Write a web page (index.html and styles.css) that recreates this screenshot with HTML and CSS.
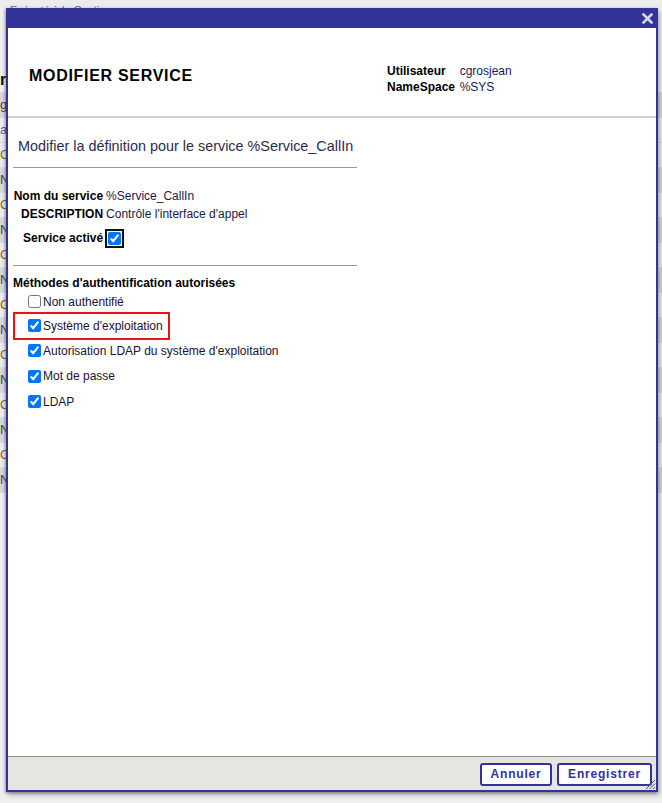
FILE: index.html
```html
<!DOCTYPE html>
<html lang="fr">
<head>
<meta charset="utf-8">
<title>Modifier service</title>
<link rel="stylesheet" href="styles.css">
</head>
<body>
<div class="page">
  <div class="page-top">Exécuté à la Gestion</div>
  <div class="page-list">
    <div class="prow gap"></div>
    <div class="prow big">r</div>
    <div class="prow shade">g</div>
    <div class="prow link">a</div>
    <div class="prow">C</div>
    <div class="prow shade">N</div>
    <div class="prow">C</div>
    <div class="prow shade">N</div>
    <div class="prow">C</div>
    <div class="prow shade">N</div>
    <div class="prow">C</div>
    <div class="prow shade">N</div>
    <div class="prow">C</div>
    <div class="prow shade">N</div>
    <div class="prow">C</div>
    <div class="prow shade">N</div>
    <div class="prow">C</div>
    <div class="prow shade">N</div>
  </div>
</div>

<div class="dialog">
  <div class="titlebar">
    <svg class="close" width="11" height="11" viewBox="0 0 11 11" aria-hidden="true">
      <path d="M1.5 1.5 L9.5 9.5 M9.5 1.5 L1.5 9.5" stroke="#d6d6ee" stroke-width="2.6" stroke-linecap="square"/>
    </svg>
  </div>
  <div class="content">
    <div class="header">
      <h1 class="title">MODIFIER SERVICE</h1>
      <table class="userinfo">
        <tr><th>Utilisateur</th><td>cgrosjean</td></tr>
        <tr><th>NameSpace</th><td>%SYS</td></tr>
      </table>
    </div>
    <div class="form">
      <div class="intro">Modifier la définition pour le service %Service_CallIn</div>
      <hr class="sep">
      <table class="props">
        <tr><th>Nom du service</th><td>%Service_CallIn</td></tr>
        <tr><th>DESCRIPTION</th><td>Contrôle l'interface d'appel</td></tr>
        <tr class="active-row"><th>Service activé</th><td><input type="checkbox" class="focused" checked></td></tr>
      </table>
      <hr class="sep sep2">
      <div class="methods-title">Méthodes d'authentification autorisées</div>
      <ul class="methods">
        <li><label><input type="checkbox">Non authentifié</label></li>
        <li class="highlight"><label><input type="checkbox" checked>Système d'exploitation</label></li>
        <li><label><input type="checkbox" checked>Autorisation LDAP du système d'exploitation</label></li>
        <li><label><input type="checkbox" checked>Mot de passe</label></li>
        <li><label><input type="checkbox" checked>LDAP</label></li>
      </ul>
    </div>
  </div>
  <div class="footer">
    <button class="btn">Annuler</button>
    <button class="btn">Enregistrer</button>
    <svg class="grip" width="11" height="11" viewBox="0 0 11 11" aria-hidden="true">
      <path d="M10 1 L1 10 M10 4.5 L4.5 10 M10 8 L8 10" stroke="#555" stroke-width="1"/>
    </svg>
  </div>
</div>
</body>
</html>
```

FILE: styles.css
```css
html, body {
  margin: 0;
  padding: 0;
}
body {
  width: 662px;
  height: 803px;
  overflow: hidden;
  background: #f0f0f0;
  font-family: "Liberation Sans", Arial, sans-serif;
  font-size: 12px;
  color: #000;
  position: relative;
}

/* background page */
.page-top {
  height: 8px;
  padding-left: 10px;
  font-size: 11px;
  line-height: 20px;
  color: #667;
  background: #ececec;
  white-space: nowrap;
}
.page-list {
  display: flex;
  flex-direction: column;
}
.prow {
  height: 24px;
  line-height: 24px;
  font-size: 13px;
  color: #8a6a10;
  background: #ececec;
  border-bottom: 1px solid #dcdcdc;
}
.prow.gap { height: 60px; background: #f0f0f0; border-bottom: none; }
.prow.big { font-size: 16px; font-weight: bold; color: #111; background: #f0f0f0; }
.prow.shade { background: #d8d8d8; color: #444; }
.prow.link { color: #4466aa; }

/* dialog */
.dialog {
  position: absolute;
  left: 6px;
  top: 8px;
  width: 648px;
  height: 782px;
  border: 2px solid #333399;
  border-top: none;
  display: flex;
  flex-direction: column;
  background: #fff;
  box-shadow: -1px 1px 3px rgba(0,0,0,0.35), 2px 3px 5px rgba(0,0,0,0.25);
}
.titlebar {
  height: 20px;
  margin: 0 -2px;
  background: #333399;
  display: flex;
  justify-content: flex-end;
  align-items: center;
  padding-right: 5px;
}
.content {
  flex: 1;
  display: flex;
  flex-direction: column;
  background: #fff;
}
.header {
  height: 88px;
  border-bottom: 2px solid #cfcfcf;
  display: flex;
  align-items: center;
}
.title {
  margin: 0 0 0 21px;
  width: 358px;
  font-size: 16px;
  font-weight: bold;
  letter-spacing: 0.7px;
  padding-top: 8px;
}
.userinfo {
  border-collapse: collapse;
  margin-top: 14px;
}
.userinfo th {
  text-align: left;
  font-weight: bold;
  padding: 0 14px 0 0;
  height: 16px;
  font-size: 12px;
}
.userinfo td {
  padding: 0;
  color: #1a1a55;
  font-size: 12px;
}
.userinfo tr + tr th { padding-right: 2px; }

.form {
  padding: 0 0 0 5px;
  width: 344px;
}
.intro {
  font-size: 14.4px;
  color: #2c2c48;
  padding: 20px 0 0 5px;
  line-height: 16px;
  white-space: nowrap;
}
.sep {
  border: none;
  border-top: 1px solid #999;
  margin: 13px 0 0 0;
  height: 0;
}
.props {
  border-collapse: collapse;
  margin-top: 19px;
}
.props th {
  text-align: right;
  font-weight: bold;
  padding: 0 3px 0 0;
  height: 18px;
  vertical-align: middle;
}
.props td {
  padding: 0;
  color: #1a1a44;
}
.props tr:nth-child(2) th { font-weight: 600; }
.props .active-row th { height: 30px; padding-left: 10px; }
.props .active-row td { padding-left: 2px; }
.focused {
  margin: 3px 0 0 0;
  width: 13px;
  height: 13px;
  outline: 2px solid #111;
  outline-offset: 1px;
  border-radius: 2px;
}
.sep2 { margin-top: 12px; }
.methods-title {
  font-weight: bold;
  margin-top: 10px;
  line-height: 14px;
}
.methods {
  list-style: none;
  margin: 0;
  padding: 0;
  display: flex;
  flex-direction: column;
}
.methods li {
  height: 25.3px;
  display: flex;
  align-items: center;
  padding-left: 14px;
  position: relative;
}
.methods li:first-child { height: 23px; }
.methods label {
  display: flex;
  align-items: center;
  color: #221133;
}
.methods input {
  margin: 0 2px 0 1px;
  width: 13px;
  height: 13px;
}
.methods li.highlight::after {
  content: "";
  position: absolute;
  left: 0;
  top: -1px;
  width: 153px;
  height: 24px;
  border: 2px solid #e8141b;
  pointer-events: none;
}

.footer {
  height: 33px;
  border-top: 1px solid #8c8c8c;
  background: #e6e5e1;
  display: flex;
  justify-content: flex-end;
  align-items: center;
  gap: 5px;
  padding-right: 4px;
  position: relative;
}
.btn {
  height: 23px;
  border: 2px solid #333399;
  border-radius: 3px;
  background: #fff;
  color: #333399;
  font-family: "Liberation Sans", Arial, sans-serif;
  font-size: 12px;
  font-weight: bold;
  letter-spacing: 0.8px;
  padding: 0 8px;
  margin-top: 1px;
}
.btn:first-of-type { width: 72px; }
.btn:nth-of-type(2) { width: 95px; }
.grip {
  position: absolute;
  right: 0;
  bottom: 0;
}
```
